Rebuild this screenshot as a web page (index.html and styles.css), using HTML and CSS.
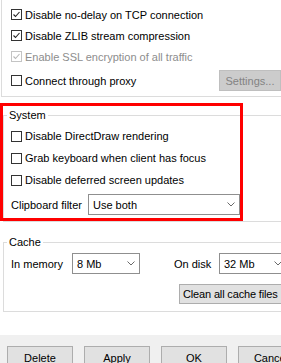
FILE: index.html
```html
<!DOCTYPE html>
<html>
<head>
<meta charset="utf-8">
<link rel="stylesheet" href="styles.css">
</head>
<body>
<div class="screen">
  <div class="tabpage">
    <div class="group conn">
      <div class="row"><span class="box"><svg viewBox="0 0 9 9" class="tick"><polyline points="1.5,4.5 3.5,6.5 7.5,2"/></svg></span><span>Disable no-delay on TCP connection</span></div>
      <div class="row"><span class="box"><svg viewBox="0 0 9 9" class="tick"><polyline points="1.5,4.5 3.5,6.5 7.5,2"/></svg></span><span>Disable ZLIB stream compression</span></div>
      <div class="row disabled"><span class="box"><svg viewBox="0 0 9 9" class="tick"><polyline points="1.5,4.5 3.5,6.5 7.5,2"/></svg></span><span>Enable SSL encryption of all traffic</span></div>
      <div class="row proxy">
        <span class="box"></span><span>Connect through proxy</span>
        <span class="btn btn-disabled settings">Settings...</span>
      </div>
    </div>

    <fieldset class="fs sys">
      <legend>System</legend>
      <div class="row r22"><span class="box"></span><span>Disable DirectDraw rendering</span></div>
      <div class="row r22"><span class="box"></span><span>Grab keyboard when client has focus</span></div>
      <div class="row r22"><span class="box"></span><span>Disable deferred screen updates</span></div>
      <div class="field clip">
        <span class="lbl clip-lbl">Clipboard filter</span>
        <span class="combo clip-combo"><span>Use both</span><svg viewBox="0 0 8 5" class="chev"><polyline points="0.5,0.5 4,4 7.5,0.5"/></svg></span>
      </div>
    </fieldset>

    <fieldset class="fs cache">
      <legend>Cache</legend>
      <div class="field">
        <span class="lbl mem-lbl">In memory</span>
        <span class="combo small"><span>8 Mb</span><svg viewBox="0 0 8 5" class="chev"><polyline points="0.5,0.5 4,4 7.5,0.5"/></svg></span>
        <span class="lbl disk-lbl">On disk</span>
        <span class="combo small"><span>32 Mb</span><svg viewBox="0 0 8 5" class="chev"><polyline points="0.5,0.5 4,4 7.5,0.5"/></svg></span>
      </div>
      <div class="clean-row"><span class="btn clean">Clean all cache files</span></div>
    </fieldset>

    <div class="highlight"></div>
  </div>
  <div class="footer">
    <span class="btn fbtn">Delete</span>
    <span class="btn fbtn">Apply</span>
    <span class="btn fbtn">OK</span>
    <span class="btn fbtn">Cancel</span>
  </div>
</div>
</body>
</html>
```

FILE: styles.css
```css
html, body {
  margin: 0;
  padding: 0;
  background: #ffffff;
}
body {
  font-family: "Liberation Sans", Arial, sans-serif;
  font-size: 11px;
  color: #000;
}
.screen {
  width: 281px;
  height: 363px;
  overflow: hidden;
  position: relative;
}
.tabpage {
  position: relative;
  height: 335px;
  background: #fff;
  box-sizing: border-box;
}
.group.conn {
  margin-left: 1px;
  width: 330px;
  border: 1px solid #dcdcdc;
  border-top: none;
  padding: 4px 0 5px 9px;
  box-sizing: border-box;
  height: 97px;
}
.row {
  display: flex;
  align-items: center;
  height: 21px;
  white-space: nowrap;
}
.row.r22 { height: 22px; }
.row.proxy {
  margin-top: 3px;
  width: 270px;
}
.box {
  width: 11px;
  height: 11px;
  box-sizing: border-box;
  border: 1px solid #333333;
  background: #fff;
  margin-right: 3px;
  flex: none;
  display: flex;
  align-items: center;
  justify-content: center;
}
.tick {
  width: 9px;
  height: 9px;
  fill: none;
  stroke: #222;
  stroke-width: 1.1;
}
.row.disabled { color: #8d8d8d; }
.row.disabled .box { border-color: #c4c4c4; }
.row.disabled .tick { stroke: #b8b8b8; }

.btn {
  display: flex;
  align-items: center;
  justify-content: center;
  box-sizing: border-box;
  height: 21px;
  background: #e1e1e1;
  border: 1px solid #adadad;
  white-space: nowrap;
}
.btn-disabled {
  background: #cccccc;
  border-color: #bfbfbf;
  color: #838383;
}
.settings {
  margin-left: auto;
  width: 62px;
}

.fs {
  margin: 0 0 0 3px;
  width: 330px;
  box-sizing: border-box;
  border: 1px solid #dcdcdc;
  padding: 0 0 0 7px;
  min-width: 0;
}
.fs legend {
  padding: 0 2px;
  margin-left: -4px;
  line-height: 13px;
  height: 13px;
}
.sys {
  margin-top: 12px;
  padding-top: 3px;
  padding-bottom: 6px;
}
.field {
  display: flex;
  align-items: center;
  height: 21px;
  white-space: nowrap;
}
.clip { margin-top: 3px; }
.clip-lbl { width: 77px; flex: none; }
.combo {
  display: flex;
  align-items: center;
  justify-content: space-between;
  box-sizing: border-box;
  height: 21px;
  border: 1px solid #8f8f8f;
  background: #fff;
  padding: 0 4px 0 4px;
  flex: none;
}
.clip-combo { width: 152px; }
.chev {
  width: 8px;
  height: 5px;
  fill: none;
  stroke: #6a6a6a;
  stroke-width: 1;
}
.cache {
  margin-top: 14px;
  padding-top: 4px;
  padding-bottom: 7px;
}
.mem-lbl { width: 61px; flex: none; }
.combo.small { width: 68px; }
.disk-lbl { width: 45px; margin-left: 34px; flex: none; }
.clean-row {
  margin-top: 10px;
  padding-left: 168px;
  display: flex;
}
.clean {
  width: 112px;
  height: 20px;
  justify-content: flex-start;
  padding-left: 3px;
  letter-spacing: -0.15px;
}

.highlight {
  position: absolute;
  left: 0;
  top: 103px;
  width: 243px;
  height: 118px;
  box-sizing: border-box;
  border: 3px solid #ff0000;
}

.footer {
  height: 28px;
  background: #f0f0f0;
  display: flex;
  gap: 11px;
  padding: 11px 0 0 7px;
  box-sizing: border-box;
}
.fbtn {
  width: 66px;
  height: 23px;
  flex: none;
}
```
